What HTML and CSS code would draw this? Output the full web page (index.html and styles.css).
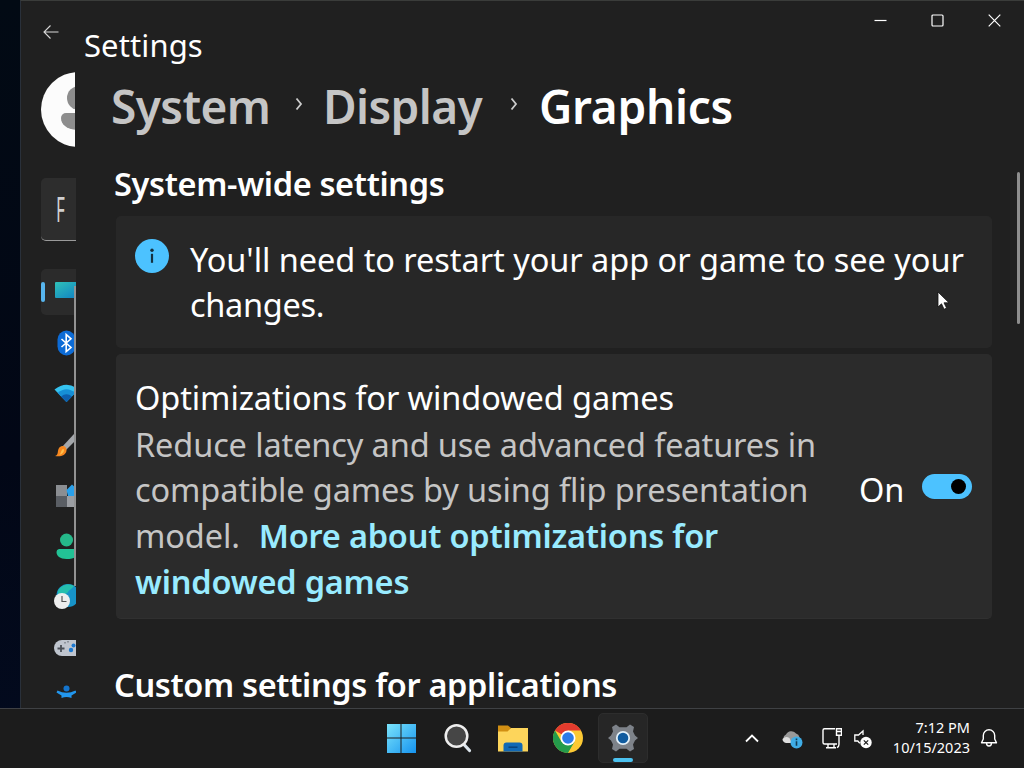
FILE: index.html
```
<!DOCTYPE html>
<html lang="en">
<head>
  <meta charset="UTF-8">
  <title>Settings</title>
  <link rel="stylesheet" href="styles.css">
</head>
<body>

<div class="desktop">
  <div class="window">

    <div class="sidebar">
      <svg class="back" width="16" height="16" viewBox="0 0 16 16"><path d="M15.500 8H1M7.500 1.500L1 8l6.500 6.500" fill="none" stroke="#d8d8d8" stroke-width="1.100"/></svg>

      <div class="avatar">
        <svg width="76" height="76" viewBox="0 0 76 76">
          <circle cx="37.500" cy="37.500" r="37.500" fill="#fcfcfc"/>
          <circle cx="38" cy="26" r="12" fill="#8d8d8d"/>
          <path d="M25 41h26a5 5 0 0 1 5 5c0 8-8 12-18 12s-18-4-18-12a5 5 0 0 1 5-5z" fill="#8d8d8d"/>
        </svg>
      </div>

      <div class="search"><span>F</span></div>

      <div class="nav">
        <div class="nav-item active">
          <svg width="28" height="28" viewBox="0 0 28 28">
            <defs><linearGradient id="gScreen" x1="0" y1="0" x2="1" y2="1"><stop offset="0" stop-color="#2fc1b8"/><stop offset="1" stop-color="#0d7cc4"/></linearGradient></defs>
            <rect x="1" y="4" width="27" height="16" rx="1" fill="url(#gScreen)"/>
          </svg>
        </div>
        <div class="nav-item">
          <svg width="28" height="28" viewBox="0 0 28 28">
            <rect x="3.500" y="1.500" width="18" height="25" rx="9" fill="#0c6bd6"/>
            <path d="M7.500 10l9.500 8.500-4.800 4V5.500L17 9.800 7.500 18" fill="none" stroke="#fff" stroke-width="1.600"/>
          </svg>
        </div>
        <div class="nav-item">
          <svg width="28" height="28" viewBox="0 0 28 28">
            <path d="M0.500 9.500Q12.500 0 24.500 9.500L12.500 22z" fill="#35c3f0"/>
            <path d="M3.700 13Q12.500 5.500 21.300 13L12.500 22z" fill="#168fd6"/>
            <path d="M7 16.500Q12.500 12 18 16.500L12.500 22z" fill="#0d5fae"/>
          </svg>
        </div>
        <div class="nav-item">
          <svg width="28" height="28" viewBox="0 0 28 28">
            <path d="M8 17L20 4l6-3v5L12 20z" fill="#a4a7ab"/>
            <path d="M1 26c4-1 2-5 4-8 3-3.500 8-2 7.500 2.500-.5 5-6 6.500-11.500 5.500z" fill="#f6871f"/>
            <path d="M5 25c2-1 2-5 4-6 2 0 1 5-4 6z" fill="#ffc04a"/>
          </svg>
        </div>
        <div class="nav-item">
          <svg width="28" height="28" viewBox="0 0 28 28">
            <rect x="2" y="4" width="11" height="11" fill="#8b8e92"/>
            <rect x="2" y="15" width="11" height="11" fill="#5a5e64"/>
            <rect x="13" y="15" width="11" height="11" fill="#9b9ea3"/>
            <path d="M12.500 9L18 3.500l7 6.500-4 5h-7z" fill="#29a0ea"/>
          </svg>
        </div>
        <div class="nav-item">
          <svg width="28" height="28" viewBox="0 0 28 28">
            <circle cx="12.500" cy="8" r="6.500" fill="#25b98a"/>
            <path d="M5 17h16a3 3 0 0 1 3 3c0 5-5 7-11.500 7S2.500 24 2.500 20a3 3 0 0 1 2.500-3z" fill="#22c295"/>
          </svg>
        </div>
        <div class="nav-item">
          <svg width="28" height="28" viewBox="0 0 28 28">
            <circle cx="14" cy="12.500" r="11.500" fill="#1793c8"/>
            <path d="M4 8c3-6 10-8 16-5-3 4-4 3-6 6s-6 1-10 2z" fill="#25bfae"/>
            <circle cx="8" cy="18" r="8" fill="#eeeeee"/>
            <path d="M8 13v5.500h4.500" fill="none" stroke="#555" stroke-width="1.200"/>
          </svg>
        </div>
        <div class="nav-item">
          <svg width="28" height="28" viewBox="0 0 28 28">
            <rect x="0" y="6" width="30" height="16" rx="8" fill="#bfc5ce"/>
            <path d="M7 11v7M3.500 14.500h7" stroke="#4a4f57" stroke-width="1.800"/>
            <circle cx="19.500" cy="11.500" r="2" fill="#1b78cf"/>
            <circle cx="17" cy="16" r="2.200" fill="#1b78cf"/>
            <path d="M11 8v1.500M14 7v1.500" stroke="#5b6068"/>
          </svg>
        </div>
        <div class="nav-item last">
          <svg width="28" height="28" viewBox="0 0 28 28">
            <circle cx="12.500" cy="10.500" r="3" fill="#1474cc"/>
            <path d="M3.500 12.500q9 4.500 18 0l1 2-5 3V20q-5-2-10 0v-2.500l-5-3z" fill="#2297ee"/>
          </svg>
        </div>
      </div>
      <div class="nav-scroll"></div>
    </div>

    <div class="main">
      <div class="titlebar">
        <span class="app-title">Settings</span>
        <div class="controls">
          <svg width="13" height="13" viewBox="0 0 13 13"><path d="M.5 6.500h12" stroke="#fff" stroke-width="1.200"/></svg>
          <svg width="13" height="13" viewBox="0 0 13 13"><rect x="1" y="1" width="11" height="11" rx="1" fill="none" stroke="#fff" stroke-width="1.200"/></svg>
          <svg width="13" height="13" viewBox="0 0 13 13"><path d="M.7.7l11.600 11.600M12.300.7L.7 12.300" stroke="#fff" stroke-width="1.200"/></svg>
        </div>
      </div>

      <div class="breadcrumb">
        <span class="crumb-system">System</span>
        <svg width="10" height="14" viewBox="0 0 10 14"><path d="M2.500 1.500L7 7l-4.500 5.500" fill="none" stroke="#ccc" stroke-width="1.800"/></svg>
        <span class="crumb-display">Display</span>
        <svg width="10" height="14" viewBox="0 0 10 14"><path d="M2.500 1.500L7 7l-4.500 5.500" fill="none" stroke="#ccc" stroke-width="1.800"/></svg>
        <span class="crumb-graphics">Graphics</span>
      </div>

      <h2 class="sec-wide">System-wide settings</h2>

      <div class="card info">
        <svg width="34" height="34" viewBox="0 0 34 34">
          <circle cx="17" cy="17" r="17" fill="#4cc2ff"/>
          <circle cx="17" cy="11.300" r="1.700" fill="#14303f"/>
          <path d="M17 14.800v9" stroke="#14303f" stroke-width="2.200"/>
        </svg>
        <p>You'll need to restart your app or game to see your<br><span class="changes">changes.</span></p>
      </div>

      <div class="card option">
        <p>
          <span class="name">Optimizations for windowed games</span>
          <span class="desc">Reduce latency and use advanced features in<br>
          compatible games by using flip presentation<br>
          model.<a class="more">More about optimizations for</a><br>
          <a>windowed games</a></span>
        </p>
        <span class="state">On</span>
        <div class="toggle"><i></i></div>
      </div>

      <h2 class="sec-custom">Custom settings for applications</h2>
    </div>

    <div class="page-scroll"></div>
  </div>

  <div class="taskbar">
    <div class="apps">
      <div class="app">
        <svg width="30" height="30" viewBox="0 0 30 30">
          <defs><linearGradient id="gWin" x1="0" y1="0" x2="1" y2="1"><stop offset="0" stop-color="#7be4fb"/><stop offset="1" stop-color="#1593ef"/></linearGradient></defs>
          <path d="M1 1h13.500v13.500H1zM15.500 1H30v13.500H15.500zM1 15.500h13.500V30H1zM15.500 15.500H30V30H15.500z" fill="url(#gWin)"/>
        </svg>
      </div>
      <div class="app">
        <svg width="30" height="30" viewBox="0 0 30 30">
          <path d="M21 20.500l6.500 7" stroke="#dce5ec" stroke-width="3.200" stroke-linecap="round"/>
          <circle cx="14.500" cy="13" r="10.800" fill="#464646" stroke="#eeeeee" stroke-width="2.500"/>
        </svg>
      </div>
      <div class="app">
        <svg width="32" height="30" viewBox="0 0 32 30">
          <path d="M2 2.500h10l3 2.500-3 5H2z" fill="#d18f13"/>
          <path d="M2 8.500h9.500L15 5h17v23.500H2z" fill="#fdd55b"/>
          <path d="M7.500 28.500v-6a3 3 0 0 1 3-3h13a3 3 0 0 1 3 3v6z" fill="#1269b5"/>
          <path d="M12.500 24.200h9" stroke="#0a437c" stroke-width="1.500"/>
        </svg>
      </div>
      <div class="app">
        <svg width="30" height="30" viewBox="0 0 30 30">
          <circle cx="15" cy="15" r="15" fill="#fcc934"/>
          <path d="M15 15L2 7.500A15 15 0 0 1 28 7.500H15z" fill="#e33b2e"/>
          <path d="M2 7.500A15 15 0 0 0 15 30l6.500-11.200L8.500 18.700z" fill="#249b4b"/>
          <circle cx="15" cy="15" r="7.500" fill="#fff"/>
          <circle cx="15" cy="15" r="5.800" fill="#2d7be8"/>
        </svg>
      </div>
      <div class="app current">
        <svg width="30" height="30" viewBox="0 0 30 30">
          <path d="M8 1.500l3.500 2.800h7L22 1.500l4 2.500-1 4.500 2 4 3 2.500-3 2.500-2 4 1 4.500-4 2.500-3.500-2.800h-7L8 28.500 4 26l1-4.500-2-4L0 15l3-2.500 2-4L4 4z" fill="#7d8289"/>
          <circle cx="15" cy="15" r="6.200" fill="#0f5b9f" stroke="#e2f0f9" stroke-width="1.800"/>
        </svg>
        <b></b>
      </div>
    </div>

    <div class="tray">
      <svg class="chevron" width="16" height="10" viewBox="0 0 16 10"><path d="M2 8.500l6-6 6 6" fill="none" stroke="#fff" stroke-width="1.800"/></svg>
      <svg class="cloud" width="22" height="20" viewBox="0 0 22 20">
        <path d="M5 13a4 4 0 0 1 0-7.500 6 6 0 0 1 10-1A5 5 0 0 1 17 13z" fill="#999"/>
        <path d="M1.500 10q3-3.500 7-1l2 5H5q-3.500-1-3.500-4z" fill="#dedede"/>
        <circle cx="15.500" cy="13.500" r="6" fill="#3fade6"/>
        <path d="M15.500 12.300v4.400M15.500 9.600v1.600" stroke="#123c55" stroke-width="1.600"/>
      </svg>
      <svg class="network" width="20" height="22" viewBox="0 0 20 22">
        <path d="M13 1.700H2.500A1.500 1.500 0 0 0 1 3.200v12.300A1.500 1.500 0 0 0 2.500 17H15M6 17v3.500M12 17v3.500M4 20.700h10" fill="none" stroke="#fff" stroke-width="1.400"/>
        <path d="M14.500 1.700h5v6.500h-5zM14.500 4.500h5M17 8.200v9q0 2.500-2 3.500" fill="none" stroke="#fff" stroke-width="1.400"/>
      </svg>
      <svg class="sound" width="20" height="20" viewBox="0 0 20 20">
        <path d="M10 6V2L5.500 6H1.800v6h3l2 2.300" fill="none" stroke="#fff" stroke-width="1.300"/>
        <circle cx="13" cy="13.500" r="5.700" fill="#fff"/>
        <path d="M10.800 11.300l4.400 4.400M15.200 11.300l-4.400 4.400" stroke="#1c1c1c" stroke-width="1.200"/>
      </svg>
      <div class="clock"><span class="time">7:12 PM</span><span class="date">10/15/2023</span></div>
      <svg class="bell" width="18" height="20" viewBox="0 0 18 20">
        <path d="M1.500 14.800L3.300 11V7.500a5.700 5.700 0 0 1 11.400 0V11l1.800 3.800zM6.500 15q0 3 2.500 3t2.500-3" fill="none" stroke="#fff" stroke-width="1.400" stroke-linejoin="round"/>
      </svg>
    </div>
  </div>

  <svg class="cursor" width="14" height="20" viewBox="0 0 14 20"><path d="M1 1v15l3.500-3.200 2.600 5.500 2.500-1.200L7 11.800h5z" fill="#fff" stroke="#111" stroke-width=".8"/></svg>
</div>

</body>
</html>
```
FILE: styles.css
```
* {
  box-sizing: border-box;
}

body {
  margin: 0;
  overflow: hidden;
  background: #020914;
  color: #fff;
  font-family: "Noto Sans", "Open Sans", sans-serif;
}

svg {
  display: block;
  flex: none;
}

.desktop {
  position: relative;
  width: 1024px;
  height: 768px;
  display: flex;
  flex-direction: column;
  background: linear-gradient(#020a14, #020716 60%, #030b1f);
}

.window {
  position: relative;
  display: flex;
  height: 708px;
  margin-left: 20px;
  background: #202020;
  border-top: 1px solid #3a3c3a;
  border-left: 1px solid #29303a;
  overflow: hidden;
}

/* sidebar */
.sidebar {
  position: relative;
  width: 55px;
  padding-left: 20px;
  overflow: hidden;
  flex: none;
}

.back {
  margin: 23px 0 0 2px;
}

.avatar {
  width: 34px;
  height: 76px;
  margin-top: 32px;
  overflow: hidden;
}

.search {
  height: 63px;
  margin-top: 30px;
  padding: 13px 0 0 15px;
  background: #2d2d2d;
  border-bottom: 1px solid #9a9a9a;
  border-radius: 5px 0 0 5px;
}

.search span {
  display: block;
  font-size: 34px;
  line-height: 36px;
  color: #d0d0d0;
  transform: scaleX(.5);
  transform-origin: left;
}

.nav {
  margin-top: 28px;
}

.nav-item {
  display: flex;
  align-items: center;
  height: 46px;
  margin-bottom: 4.800px;
  padding-left: 13px;
}

.active {
  background: #2b2b2b;
  border-radius: 5px 0 0 5px;
  padding-left: 0;
}

.active::before {
  content: "";
  flex: none;
  width: 4px;
  height: 20px;
  margin-right: 9px;
  border-radius: 2px;
  background: #57b5ee;
}

.last {
  height: 34px;
}

.nav-scroll {
  position: absolute;
  left: 53px;
  top: 285px;
  width: 2px;
  height: 300px;
  background: #929292;
}

/* content */
.main {
  flex: 1;
  padding-left: 39px;
}

.titlebar {
  display: flex;
  justify-content: space-between;
  height: 74px;
  margin-left: -31px;
}

.app-title {
  padding-top: 22px;
  font-size: 31px;
  line-height: 44px;
  letter-spacing: .1px;
}

.controls {
  display: flex;
  gap: 44px;
  padding: 13px 23px 0 0;
}

.breadcrumb {
  display: flex;
  height: 64px;
  margin-left: -4px;
  color: #c5c5c5;
  font-size: 46px;
  line-height: 62px;
  font-weight: 600;
  letter-spacing: -.6px;
  white-space: nowrap;
}

.breadcrumb svg {
  margin-top: 22px;
}

.crumb-system { width: 183px; }
.crumb-display { width: 186px; margin-left: 19px; }
.crumb-graphics { margin-left: 20px; color: #fff; letter-spacing: -.3px; }

h2 {
  margin: 0 0 0 -1px;
  font-size: 32.5px;
  line-height: 44px;
  font-weight: 600;
  letter-spacing: -.34px;
  white-space: nowrap;
}

.sec-wide {
  margin-top: 23px;
}

.card {
  width: 876px;
  margin-left: 1px;
  background: #2b2b2b;
  border-radius: 5px;
  display: flex;
  font-size: 32.5px;
  line-height: 45.700px;
  letter-spacing: -.05px;
  white-space: nowrap;
}

.card p {
  margin: 0;
}

.info {
  height: 132px;
  margin-top: 10px;
  padding: 23px 19px;
  background: #272727;
}

.info p {
  margin: -2px 0 0 21px;
  line-height: 45px;
}

.changes {
  letter-spacing: -.3px;
}

.option {
  height: 265px;
  margin-top: 6px;
  padding: 21px 20px 0 19px;
  border-bottom: 1px solid #303030;
}

.option p {
  width: 724px;
}

.name {
  display: block;
  height: 46.500px;
  letter-spacing: -.1px;
}

.desc {
  color: #c5c5c5;
  letter-spacing: -.12px;
}

.option a {
  color: #99ebff;
  font-weight: 600;
  letter-spacing: -.2px;
}

.option .more {
  margin-left: 19px;
}

.state {
  width: 63px;
  padding-top: 92px;
}

.toggle {
  width: 50px;
  height: 25px;
  margin-top: 99px;
  padding: 5px 6px;
  border-radius: 13px;
  background: #4cc2ff;
  display: flex;
  justify-content: flex-end;
}

.toggle i {
  width: 15px;
  height: 15px;
  border-radius: 50%;
  background: #000;
}

.sec-custom {
  margin-top: 44px;
}

.page-scroll {
  position: absolute;
  left: 996px;
  top: 171px;
  width: 3px;
  height: 152px;
  border-radius: 2px;
  background: #8e8e8e;
}

/* taskbar */
.taskbar {
  display: flex;
  height: 60px;
  background: #1c1c1c;
  border-top: 1px solid #3f4144;
}

.apps {
  display: flex;
  width: 650px;
  padding: 4px 0 0 376px;
  gap: 5.500px;
  flex: none;
}

.app {
  width: 50px;
  height: 50px;
  display: flex;
  flex: none;
  align-items: center;
  justify-content: center;
}

.current {
  position: relative;
  background: #262626;
  border: 1px solid #2d2d2d;
  border-radius: 5px;
}

.current b {
  position: absolute;
  left: 14px;
  bottom: 0;
  width: 20px;
  height: 4px;
  border-radius: 2px;
  background: #4cc2f0;
}

.tray {
  display: flex;
  padding-left: 94px;
}

.chevron { margin-top: 24px; }
.cloud { margin: 20px 0 0 21px; }
.network { margin: 18px 0 0 19px; }
.sound { margin: 20px 0 0 11px; }

.clock {
  width: 97px;
  padding-top: 8px;
  display: flex;
  flex-direction: column;
  align-items: flex-end;
  font-size: 14.500px;
  line-height: 20px;
  white-space: nowrap;
}

.bell { margin: 19px 0 0 10px; }

.cursor {
  position: absolute;
  left: 937px;
  top: 291px;
}
```
